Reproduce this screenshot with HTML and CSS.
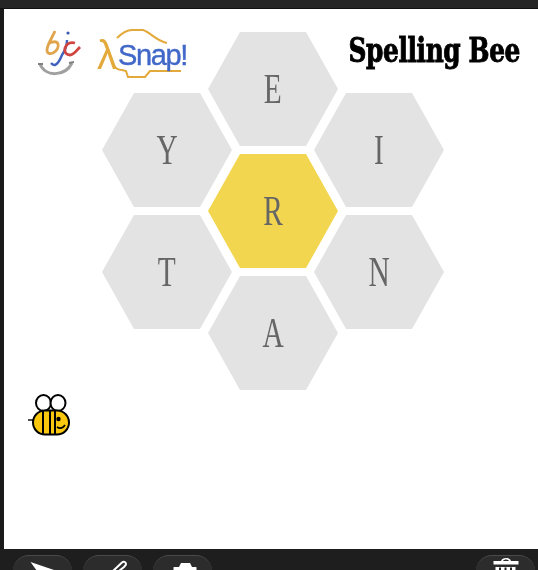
FILE: index.html
```html
<!DOCTYPE html>
<html lang="en">
<head>
<meta charset="utf-8">
<title>Spelling Bee</title>
<link rel="stylesheet" href="styles.css">
</head>
<body>
<div class="topbar"></div>
<div class="middle">
  <div class="edge"></div>
  <main class="stage">
    <header class="head">
      <div class="logos">
        <svg class="bjc" width="50" height="56" viewBox="0 0 50 56" aria-label="bjc logo">
          <path d="M20 6 C17 13 12 20 12 25 C12 29 15 29 18 28 C22 26 24 22 23 19 C22 16 17 16 13 19" fill="none" stroke="#e0a54c" stroke-width="2.800"/>
          <path d="M32 15 C32 22 29 27 27 30 C25 35 23 39 20 40 C18 40.500 17 39 16 38" fill="none" stroke="#3f63bd" stroke-width="2.400"/>
          <circle cx="33" cy="8" r="1.600" fill="#3a5cb0"/>
          <path d="M40 18 C36 17 32 18 30 23 C29 28 32 30 35 30 C39 30 42 25 45 22" fill="none" stroke="#d0453f" stroke-width="2.800"/>
          <path d="M5 39 C10 52 30 52 37 38" fill="none" stroke="#a0a0a0" stroke-width="3"/>
          <path d="M3 39 L8 39 M34 38 L39 37" stroke="#808080" stroke-width="2.200"/>
        </svg>
        <svg class="snap" width="96" height="56" viewBox="0 0 96 56" aria-label="Snap logo">
          <path d="M21 13 C26 8 30 5 36 5 L47 5 C54 7 60 16 71 18" fill="none" stroke="#e3a93a" stroke-width="2"/>
          <path d="M16 38 C20 44 22 45 26 45 L30 46 L32 52 L49 52 L54 46 L85 46" fill="none" stroke="#e3a93a" stroke-width="2"/>
          <text x="1" y="44" class="lambda">λ</text>
          <text x="22" y="40" class="snaptext">Snap!</text>
        </svg>
      </div>
      <h1 class="title">Spelling Bee</h1>
    </header>
    <div class="hex pos-e"><span class="letter">E</span></div>
    <div class="hex pos-y"><span class="letter">Y</span></div>
    <div class="hex pos-i"><span class="letter">I</span></div>
    <div class="hex center pos-r"><span class="letter">R</span></div>
    <div class="hex pos-t"><span class="letter">T</span></div>
    <div class="hex pos-n"><span class="letter">N</span></div>
    <div class="hex pos-a"><span class="letter">A</span></div>
    <svg class="bee" width="46" height="46" viewBox="0 0 46 46" aria-label="bee">
      <ellipse cx="16.500" cy="10" rx="7.500" ry="8" fill="#fff" stroke="#000" stroke-width="2"/>
      <ellipse cx="31" cy="10" rx="7.500" ry="8" fill="#fff" stroke="#000" stroke-width="2"/>
      <path d="M1 27 L6 27" stroke="#000" stroke-width="1.400"/>
      <rect x="6" y="17.500" width="36" height="24" rx="12" fill="#f8c70e" stroke="#000" stroke-width="2"/>
      <path d="M16 18 V41 M23 18 V41 M28 18 V41" stroke="#000" stroke-width="2"/>
      <circle cx="31.500" cy="26" r="2.200" fill="#000"/>
      <path d="M30 34 C33 36 36 35 38 32" fill="none" stroke="#000" stroke-width="1.800"/>
    </svg>
  </main>
</div>
<footer class="toolbar">
  <div class="tools">
    <button class="tool" aria-label="arrow">
      <svg width="36" height="15" viewBox="0 0 36 15"><path d="M5.500 6 L32 15 L12 15 Z" fill="#fff"/></svg>
    </button>
    <button class="tool" aria-label="pen">
      <svg width="36" height="15" viewBox="0 0 36 15"><path d="M18 15 L27 6.500 C28.500 5 31 6 31 8 C31 9 30 10 29 11 L24 15" fill="none" stroke="#fff" stroke-width="2"/></svg>
    </button>
    <button class="tool" aria-label="camera">
      <svg width="36" height="15" viewBox="0 0 36 15"><path d="M8.500 15 V11.500 Q8.500 11 9 11 L14 11 L16 7 L25 7 L27 11 L31 11 Q31.500 11 31.500 11.500 V15 Z" fill="#fff"/></svg>
    </button>
  </div>
  <button class="tool" aria-label="trash">
    <svg width="36" height="15" viewBox="0 0 36 15"><path d="M5.500 5 H30.500 V8.500 H5.500 Z M13 5 C14 1 22 1 23 5 L21 5 C20 3 16 3 15 5 Z M7.500 11 H27.500 V15 H7.500 Z" fill="#fff"/><path d="M12 11.500 V14 M17.500 11.500 V14 M23 11.500 V14" stroke="#222" stroke-width="2"/></svg>
  </button>
</footer>
</body>
</html>
```
FILE: styles.css
```css
html, body {
  margin: 0;
  padding: 0;
}
body {
  width: 538px;
  height: 570px;
  overflow: hidden;
  background: #1e1e1e;
  display: flex;
  flex-direction: column;
}
.topbar {
  height: 9px;
  flex: none;
  background: #262626;
  border-bottom: 1px solid #111;
  box-sizing: border-box;
}
.middle {
  height: 540px;
  flex: none;
  display: flex;
}
.edge {
  width: 4px;
  flex: none;
  background: #1a1a1a;
}
.stage {
  position: relative;
  flex: 1;
  background: #fff;
}
.head {
  display: flex;
  justify-content: space-between;
  align-items: flex-start;
  padding: 16px 18px 0 31px;
}
.logos {
  display: flex;
  gap: 12px;
  filter: blur(.6px);
}
.snap {
  margin-left: -1px;
}
.lambda {
  font: 40px "Liberation Sans", sans-serif;
  fill: #e3a93a;
}
.snaptext {
  font: 29px "Liberation Sans", sans-serif;
  letter-spacing: -1.400px;
  stroke: #4168c8;
  stroke-width: .4px;
  fill: #4168c8;
}
.title {
  margin: 7px 0 0;
  font: bold 34px/36px "DejaVu Serif", serif;
  letter-spacing: -.5px;
  color: #000;
  -webkit-text-stroke: 1px #000;
  white-space: nowrap;
  transform: scaleX(.73);
  transform-origin: right center;
  filter: blur(.5px);
}
.hex {
  position: absolute;
  width: 130px;
  height: 114px;
  background: #e3e3e3;
  clip-path: polygon(24.6% 0, 75.4% 0, 100% 50%, 75.4% 100%, 24.6% 100%, 0 50%);
  display: flex;
  align-items: center;
  justify-content: center;
}
.center {
  background: #f3d64f;
}
.letter {
  font: 42px/1 "Liberation Serif", serif;
  color: #666;
  transform: scaleX(.7);
  filter: blur(.4px);
}
.pos-e { left: 204px; top: 23px; }
.pos-y { left: 98px; top: 84px; }
.pos-i { left: 310px; top: 84px; }
.pos-r { left: 204px; top: 145px; }
.pos-t { left: 98px; top: 206px; }
.pos-n { left: 310px; top: 206px; }
.pos-a { left: 204px; top: 267px; }
.bee {
  position: absolute;
  left: 23px;
  top: 384px;
}
.toolbar {
  flex: 1;
  display: flex;
  justify-content: space-between;
  align-items: flex-start;
  padding: 6px 3px 0 13px;
  overflow: hidden;
}
.tools {
  display: flex;
  gap: 11px;
}
.tool {
  width: 59px;
  height: 30px;
  padding: 0;
  border: 0;
  border-top: 1px solid #4a4a4a;
  border-radius: 16px 16px 0 0;
  background: #2c2c2c;
  display: flex;
  justify-content: center;
  align-items: flex-start;
}
```
